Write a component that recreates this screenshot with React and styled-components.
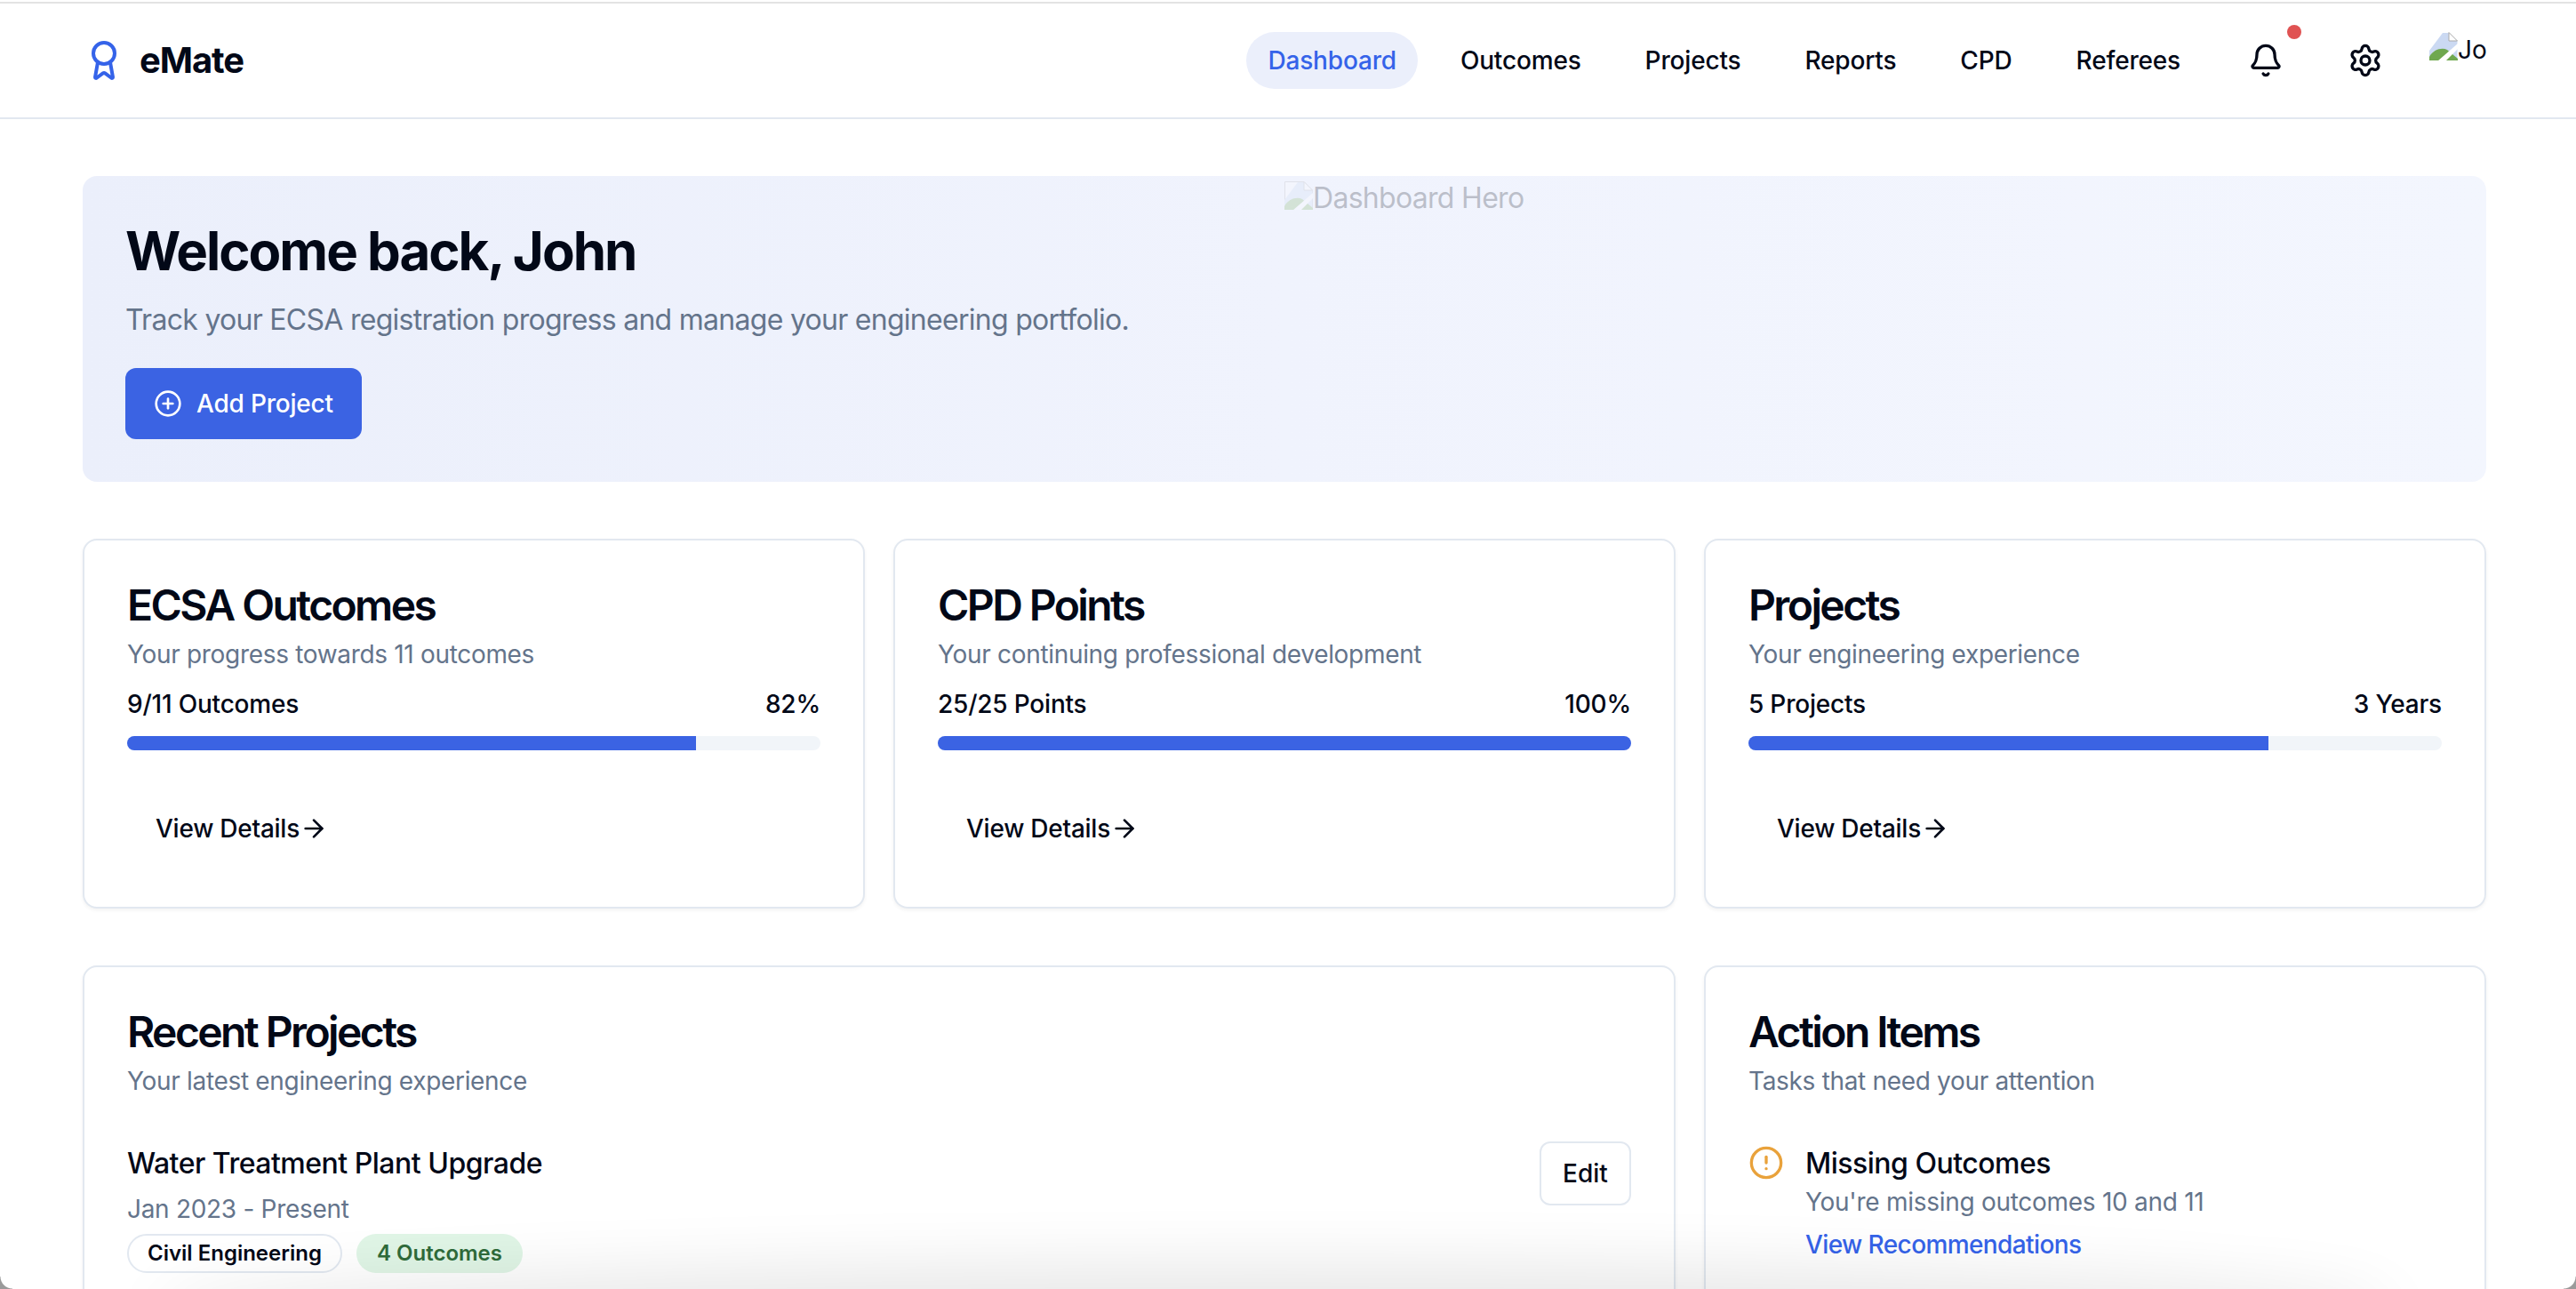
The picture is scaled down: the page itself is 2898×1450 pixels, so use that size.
import React from 'react';
import styled, { createGlobalStyle } from 'styled-components';
import { ArrowRight, Award, Bell, CircleAlert, CirclePlus, Settings } from 'lucide-react';

const GlobalStyle = createGlobalStyle`
  * { box-sizing: border-box; }
  html, body { margin: 0; height: 100%; overflow: hidden; background: #fff; }
  body {
    font-family: Inter, 'Liberation Sans', sans-serif;
    color: #020817;
    font-size: 32px;
    line-height: 48px;
  }
`;

const navItems = ['Dashboard', 'Outcomes', 'Projects', 'Reports', 'CPD', 'Referees'];

const stats = [
  { title: 'ECSA Outcomes', sub: 'Your progress towards 11 outcomes', left: '9/11 Outcomes', right: '82%', value: 82 },
  { title: 'CPD Points', sub: 'Your continuing professional development', left: '25/25 Points', right: '100%', value: 100 },
  { title: 'Projects', sub: 'Your engineering experience', left: '5 Projects', right: '3 Years', value: 75 },
];

const BrokenImage = ({ framed }) => (
  <BrokenIcon viewBox="0 0 32 32" aria-hidden="true">
    {framed && <path d="M0.5 31.5V0.5H22L31.5 10V31.5Z" fill="#fff" stroke="#a9a9a9" />}
    <path d="M0 21L15 1H22L31.5 10V31H0Z" fill="#cbd9f2" />
    <path d="M0 31V28C4 20 14 17 20 20L32 30V32H0Z" fill="#6fa84f" />
    <path d="M9 33L33 12V18L18 33Z" fill="#fff" />
    <path d="M22 0.5V10H31.5Z" fill="#fff" stroke="#a9a9a9" />
  </BrokenIcon>
);

export default function App() {
  return (
    <>
      <GlobalStyle />
      <Screen>
        <Header>
          <Logo>
            <Award size={48} color="#3563e9" />
            <LogoText>eMate</LogoText>
          </Logo>
          <HeaderRight>
            <Nav>
              {navItems.map((item) => (
                <NavLink key={item} $active={item === 'Dashboard'}>
                  {item}
                </NavLink>
              ))}
            </Nav>
            <IconButton>
              <Bell size={40} />
              <NotificationDot />
            </IconButton>
            <IconButton>
              <Settings size={40} />
            </IconButton>
            <Avatar>
              <BrokenImage />
              Jo
            </Avatar>
          </HeaderRight>
        </Header>

        <Main>
          <Hero>
            <HeroImage>
              <BrokenImage framed />
              Dashboard Hero
            </HeroImage>
            <HeroTitle>Welcome back, John</HeroTitle>
            <HeroText>Track your ECSA registration progress and manage your engineering portfolio.</HeroText>
            <PrimaryButton>
              <CirclePlus size={32} />
              Add Project
            </PrimaryButton>
          </Hero>

          <StatsGrid>
            {stats.map((stat) => (
              <Card key={stat.title}>
                <CardTitle>{stat.title}</CardTitle>
                <CardSub>{stat.sub}</CardSub>
                <ProgressLabels>
                  <span>{stat.left}</span>
                  <span>{stat.right}</span>
                </ProgressLabels>
                <ProgressTrack>
                  <ProgressFill style={{ width: `${stat.value}%` }} />
                </ProgressTrack>
                <GhostButton>
                  View Details
                  <ArrowRight size={32} />
                </GhostButton>
              </Card>
            ))}
          </StatsGrid>

          <BottomGrid>
            <WideCard>
              <CardTitle>Recent Projects</CardTitle>
              <CardSub>Your latest engineering experience</CardSub>
              <ProjectRow>
                <div>
                  <ItemTitle>Water Treatment Plant Upgrade</ItemTitle>
                  <ProjectDate>Jan 2023 - Present</ProjectDate>
                  <TagRow>
                    <Tag>Civil Engineering</Tag>
                    <Tag $green>4 Outcomes</Tag>
                  </TagRow>
                </div>
                <EditButton>Edit</EditButton>
              </ProjectRow>
            </WideCard>
            <TallCard>
              <CardTitle>Action Items</CardTitle>
              <CardSub>Tasks that need your attention</CardSub>
              <ActionRow>
                <ActionIcon>
                  <CircleAlert size={40} color="#e9a23b" />
                </ActionIcon>
                <div>
                  <ItemTitle>Missing Outcomes</ItemTitle>
                  <ActionText>You're missing outcomes 10 and 11</ActionText>
                  <ActionLink>View Recommendations</ActionLink>
                </div>
              </ActionRow>
            </TallCard>
          </BottomGrid>
        </Main>

        <WindowShadow />
        <WindowCorner $side="left" />
        <WindowCorner $side="right" />
      </Screen>
    </>
  );
}

const Screen = styled.div`
  position: relative;
  height: 1450px;
  overflow: hidden;
  padding-top: 2px;
`;

const Header = styled.header`
  height: 132px;
  display: flex;
  align-items: center;
  justify-content: space-between;
  padding: 0 101px 0 93px;
  border-top: 2px solid #e3e3e3;
  border-bottom: 2px solid #e2e8f0;
`;

const Logo = styled.div`
  display: flex;
  align-items: center;
  gap: 16px;
`;

const LogoText = styled.span`
  font-size: 40px;
  font-weight: 700;
  letter-spacing: -1.1px;
`;

const HeaderRight = styled.div`
  display: flex;
  align-items: center;
  gap: 32px;
`;

const Nav = styled.nav`
  display: flex;
  gap: 24px;
`;

const NavLink = styled.a`
  height: 64px;
  padding: 0 24px;
  display: flex;
  align-items: center;
  border-radius: 32px;
  font-size: 28px;
  font-weight: 500;
  letter-spacing: -0.17px;
  color: ${(p) => (p.$active ? '#3563e9' : '#020817')};
  background: ${(p) => (p.$active ? '#ebeffb' : 'transparent')};
`;

const IconButton = styled.button`
  position: relative;
  width: 80px;
  height: 80px;
  display: flex;
  align-items: center;
  justify-content: center;
  padding: 0;
  border: none;
  background: none;
  color: #020817;
`;

const NotificationDot = styled.span`
  position: absolute;
  top: 0;
  right: 0;
  width: 16px;
  height: 16px;
  border-radius: 50%;
  background: #e05252;
`;

const Avatar = styled.div`
  width: 64px;
  height: 64px;
  overflow: hidden;
  font-size: 28px;
  line-height: 41px;
  white-space: nowrap;
`;

const BrokenIcon = styled.svg`
  width: 32px;
  height: 32px;
  display: inline-block;
  vertical-align: -2px;
`;

const Main = styled.main`
  padding: 64px 101px 0 93px;
  display: flex;
  flex-direction: column;
  gap: 64px;
`;

const Hero = styled.section`
  position: relative;
  padding: 48px;
  border-radius: 16px;
  overflow: hidden;
  background: linear-gradient(90deg, #ebeffb, #f0f3fd 50%, #f3f6fe);
`;

const HeroImage = styled.div`
  position: absolute;
  top: 0;
  left: 50%;
  right: 0;
  height: 100%;
  opacity: 0.22;
  line-height: 50px;
  letter-spacing: -0.7px;
  color: #020817;
`;

const HeroTitle = styled.h1`
  margin: 0;
  font-size: 60px;
  line-height: 72px;
  font-weight: 700;
  letter-spacing: -2px;
`;

const HeroText = styled.p`
  margin: 14px 0 26px;
  font-size: 32px;
  line-height: 56px;
  letter-spacing: -0.72px;
  color: #64748b;
`;

const PrimaryButton = styled.button`
  position: relative;
  height: 80px;
  padding: 0 32px;
  display: inline-flex;
  align-items: center;
  gap: 16px;
  border: none;
  border-radius: 12px;
  font-family: inherit;
  font-size: 28px;
  font-weight: 500;
  letter-spacing: -0.2px;
  color: #fff;
  background: #3b63e3;
`;

const StatsGrid = styled.div`
  display: grid;
  grid-template-columns: repeat(3, 1fr);
  gap: 32px;
`;

const BottomGrid = styled(StatsGrid)``;

const Card = styled.section`
  padding: 48px;
  border: 2px solid #e2e8f0;
  border-radius: 16px;
  background: #fff;
  box-shadow: 0 2px 4px rgba(0, 0, 0, 0.05);
`;

const WideCard = styled(Card)`
  grid-column: span 2;
  min-height: 600px;
`;

const TallCard = styled(Card)`
  min-height: 600px;
`;

const CardTitle = styled.h2`
  margin: 0;
  font-size: 48px;
  line-height: 50px;
  font-weight: 600;
  letter-spacing: -2.6px;
`;

const CardSub = styled.p`
  margin: 10px 0 0;
  font-size: 28px;
  line-height: 40px;
  letter-spacing: -0.32px;
  color: #64748b;
`;

const ProgressLabels = styled.div`
  margin-top: 16px;
  display: flex;
  justify-content: space-between;
  font-size: 28px;
  line-height: 40px;
  font-weight: 500;
  letter-spacing: -0.2px;
`;

const ProgressTrack = styled.div`
  margin-top: 16px;
  height: 16px;
  border-radius: 8px;
  overflow: hidden;
  background: #f1f5f9;
`;

const ProgressFill = styled.div`
  height: 100%;
  background: #3b63e3;
`;

const GhostButton = styled.button`
  margin-top: 48px;
  height: 80px;
  padding: 0 32px;
  display: flex;
  align-items: center;
  border: none;
  background: none;
  font-family: inherit;
  font-size: 28px;
  font-weight: 500;
  letter-spacing: -0.25px;
  color: #020817;
`;

const ProjectRow = styled.div`
  margin-top: 48px;
  display: flex;
  justify-content: space-between;
  align-items: flex-start;
`;

const ItemTitle = styled.div`
  font-size: 32px;
  line-height: 50px;
  font-weight: 500;
  letter-spacing: -0.5px;
`;

const ProjectDate = styled.div`
  margin-top: 6px;
  font-size: 28px;
  line-height: 40px;
  letter-spacing: -0.3px;
  color: #64748b;
`;

const TagRow = styled.div`
  margin-top: 8px;
  display: flex;
  gap: 16px;
`;

const Tag = styled.span`
  height: 44px;
  padding: 0 21px;
  display: flex;
  align-items: center;
  border: 2px solid ${(p) => (p.$green ? 'transparent' : '#e2e8f0')};
  border-radius: 22px;
  font-size: 24px;
  font-weight: 600;
  color: ${(p) => (p.$green ? '#2f6b3a' : '#020817')};
  background: ${(p) => (p.$green ? '#e0f5e6' : '#fff')};
`;

const EditButton = styled.button`
  width: 103px;
  height: 72px;
  padding: 0;
  border: 2px solid #e2e8f0;
  border-radius: 12px;
  background: #fff;
  font-family: inherit;
  font-size: 28px;
  font-weight: 500;
  color: #020817;
`;

const ActionRow = styled.div`
  margin-top: 48px;
  display: flex;
  gap: 24px;
`;

const ActionIcon = styled.div`
  margin-top: 4px;
  height: 40px;
`;

const ActionText = styled.div`
  margin-top: -2px;
  font-size: 28px;
  line-height: 40px;
  letter-spacing: -0.28px;
  color: #64748b;
`;

const ActionLink = styled.a`
  display: block;
  margin-top: 8px;
  font-size: 28px;
  line-height: 40px;
  font-weight: 500;
  letter-spacing: -0.6px;
  color: #3563e9;
`;

/* the soft grey glow and rounded corners the screenshot's window has at the bottom */
const WindowShadow = styled.div`
  position: absolute;
  left: 200px;
  right: 230px;
  bottom: -50px;
  height: 50px;
  border-radius: 50%;
  box-shadow: 0 0 70px 30px rgba(0, 0, 0, 0.09);
  pointer-events: none;
`;

const WindowCorner = styled.div`
  position: absolute;
  bottom: 0;
  ${(p) => p.$side}: 0;
  width: 14px;
  height: 14px;
  background: radial-gradient(
    circle at ${(p) => (p.$side === 'left' ? '100% 0' : '0 0')},
    transparent 13px,
    #9a9a9a 14px
  );
  pointer-events: none;
`;
